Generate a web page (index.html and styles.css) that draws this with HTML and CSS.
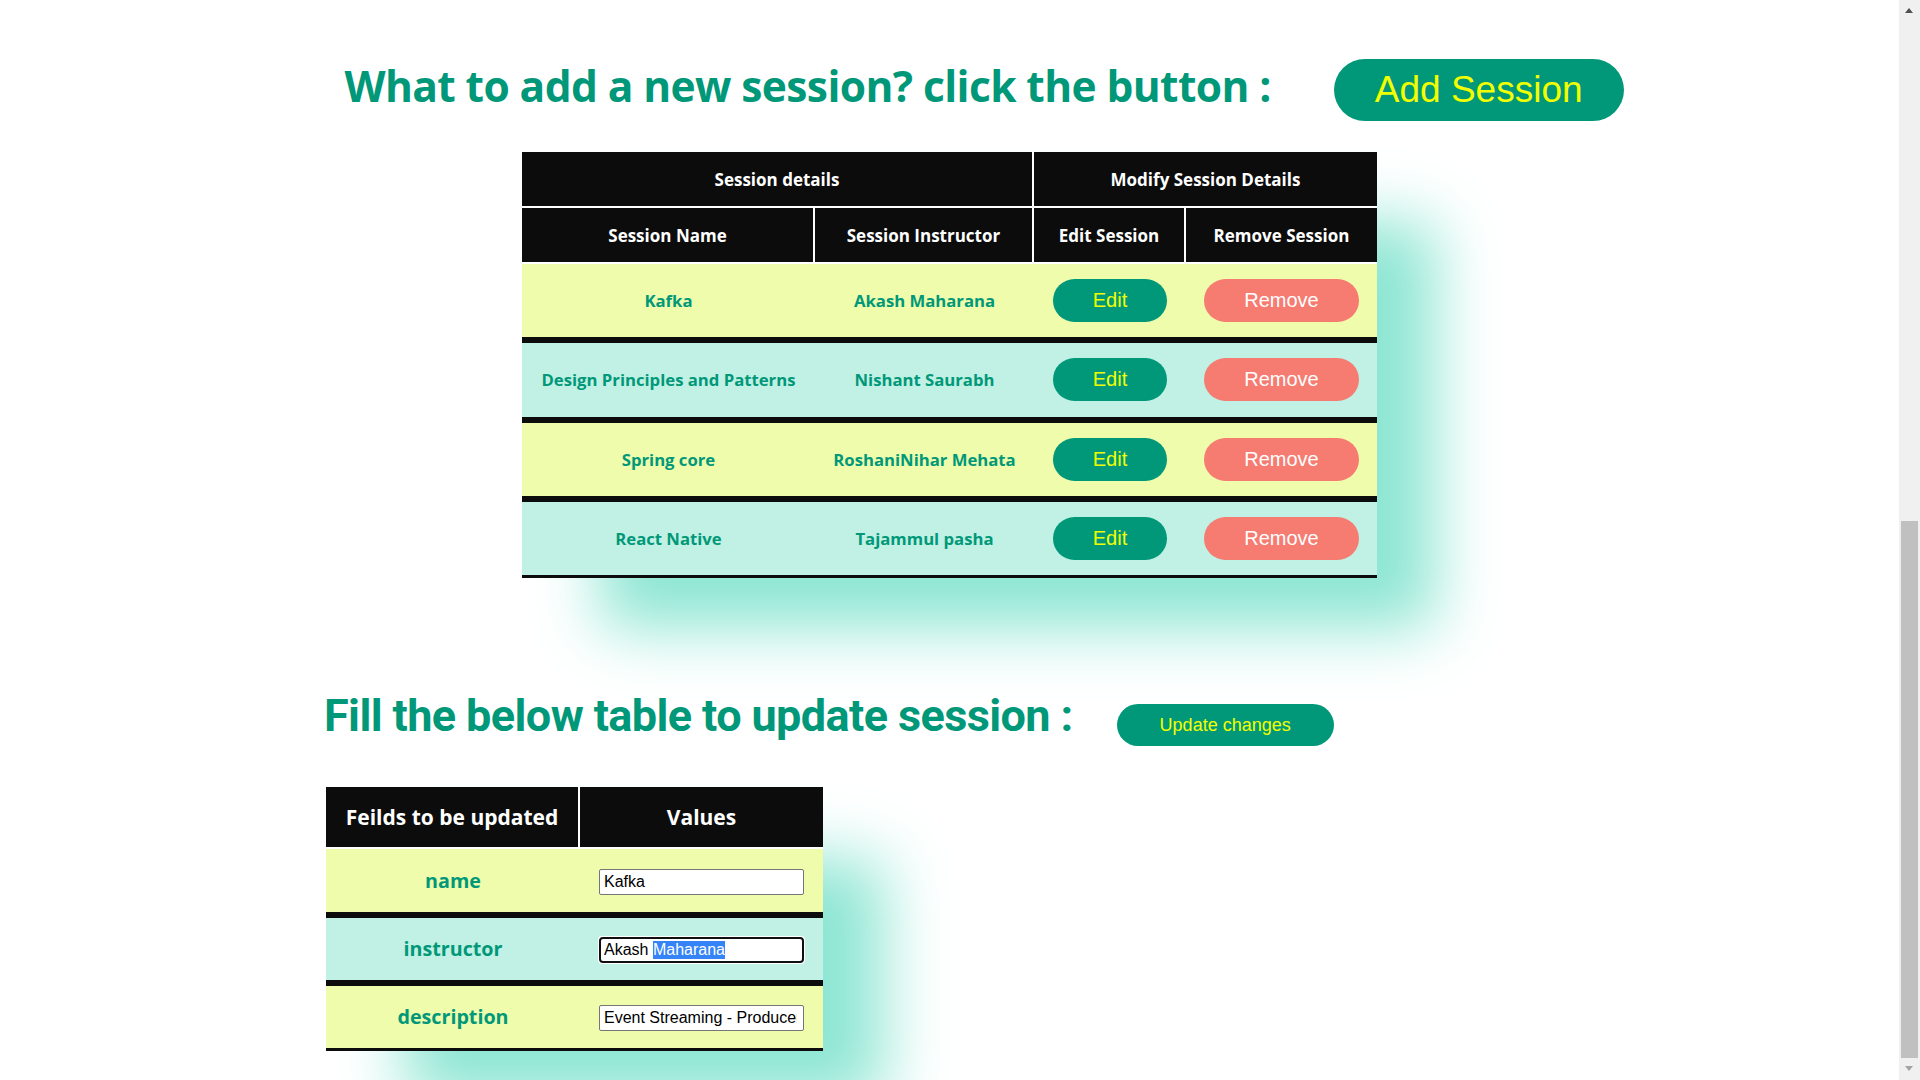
FILE: index.html
```html
<!DOCTYPE html>
<html lang="en">
<head>
<meta charset="utf-8">
<title>Sessions</title>
<link rel="stylesheet" href="styles.css">
</head>
<body>
<main class="page">
  <section class="add-row">
    <h1 class="title-main">What to add a new session? click the button :</h1>
    <button class="btn btn-add" type="button">Add Session</button>
  </section>

  <table class="sessions">
    <colgroup>
      <col class="c-name"><col class="c-inst"><col class="c-edit"><col class="c-remove">
    </colgroup>
    <thead>
      <tr class="head-top">
        <th colspan="2">Session details</th>
        <th colspan="2" class="last">Modify Session Details</th>
      </tr>
      <tr class="head-sub">
        <th>Session Name</th>
        <th>Session Instructor</th>
        <th>Edit Session</th>
        <th class="last">Remove Session</th>
      </tr>
    </thead>
    <tbody>
      <tr class="row-yellow">
        <td>Kafka</td><td>Akash Maharana</td>
        <td><button class="btn btn-edit" type="button">Edit</button></td>
        <td><button class="btn btn-remove" type="button">Remove</button></td>
      </tr>
      <tr class="row-mint">
        <td>Design Principles and Patterns</td><td>Nishant Saurabh</td>
        <td><button class="btn btn-edit" type="button">Edit</button></td>
        <td><button class="btn btn-remove" type="button">Remove</button></td>
      </tr>
      <tr class="row-yellow">
        <td>Spring core</td><td>RoshaniNihar Mehata</td>
        <td><button class="btn btn-edit" type="button">Edit</button></td>
        <td><button class="btn btn-remove" type="button">Remove</button></td>
      </tr>
      <tr class="row-mint">
        <td>React Native</td><td>Tajammul pasha</td>
        <td><button class="btn btn-edit" type="button">Edit</button></td>
        <td><button class="btn btn-remove" type="button">Remove</button></td>
      </tr>
    </tbody>
  </table>

  <section class="update-section">
    <div class="update-row">
      <h2 class="title-update">Fill the below table to update session :</h2>
      <button class="btn btn-update" type="button">Update changes</button>
    </div>
    <table class="update-table">
      <colgroup><col class="u-field"><col class="u-value"></colgroup>
      <thead>
        <tr><th>Feilds to be updated</th><th class="last">Values</th></tr>
      </thead>
      <tbody>
        <tr class="row-yellow">
          <td>name</td>
          <td><input class="field-input" type="text" value="Kafka"></td>
        </tr>
        <tr class="row-mint">
          <td>instructor</td>
          <td><input id="instructor-input" class="field-input" type="text" value="Akash Maharana"></td>
        </tr>
        <tr class="row-yellow">
          <td>description</td>
          <td><input class="field-input" type="text" value="Event Streaming - Producer and Consumer"></td>
        </tr>
      </tbody>
    </table>
  </section>
</main>

<div class="scrollbar" aria-hidden="true">
  <span class="sb-up"></span>
  <span class="sb-thumb"></span>
  <span class="sb-down"></span>
</div>
<script src="app.js"></script>
</body>
</html>
```
FILE: styles.css
```css
html, body { height: 100%; }
body {
  margin: 0 21px 0 0;
  background: #ffffff;
  font-family: "Open Sans", sans-serif;
  overflow: hidden;
}

.page { display: flex; flex-direction: column; }

/* ---------- headings rows ---------- */
.add-row {
  display: flex;
  align-items: baseline;
  justify-content: center;
  gap: 63px;
  padding: 59px 0 0 69px;
}
.title-main {
  margin: 0;
  font: 700 42.5px/1 "Open Sans", sans-serif;
  letter-spacing: -0.6px;
  color: #009879;
}

.btn {
  border: none;
  cursor: pointer;
  font-family: "Liberation Sans", Arial, sans-serif;
  line-height: normal;
}
.btn-add {
  font-size: 37px;
  padding: 10px 41px;
  border-radius: 32px;
  background: #009879;
  color: #f2ff00;
}

/* ---------- sessions table ---------- */
.sessions {
  margin: 31px auto 0;
  width: 855px;
  table-layout: fixed;
  border-collapse: separate;
  border-spacing: 0;
  box-shadow: 68px 60px 60px -10px #8de6d3;
}
.c-name { width: 293px; }
.c-inst { width: 219px; }
.c-edit { width: 152px; }
.c-remove { width: 191px; }

.sessions th, .update-table th {
  box-sizing: border-box;
  padding: 0;
  background: #0c0c0c;
  color: #ffffff;
  font-weight: 700;
  border-right: 2px solid #ffffff;
  border-bottom: 2px solid #ffffff;
}
.sessions th.last, .update-table th.last { border-right: none; }
.sessions th { height: 56px; font-size: 17px; }

.sessions td, .update-table td {
  box-sizing: border-box;
  padding: 0;
  text-align: center;
  vertical-align: middle;
  color: #009879;
  font-weight: 700;
  border-bottom: 6px solid #0c0c0c;
}
.sessions td { height: 79.3px; font-size: 16.7px; }
.sessions tbody tr:last-child td { height: 76.3px; border-bottom-width: 3px; }

.row-yellow td { background: #effcab; }
.row-mint td { background: #c0f1e4; }

.btn-edit, .btn-remove {
  font-size: 20px;
  padding: 10px 40px;
  border-radius: 22px;
}
.btn-edit { background: #009879; color: #f2ff00; }
.btn-remove { background: #f67b71; color: #ffffff; }

/* ---------- update section ---------- */
.update-section {
  padding-left: 324px;
}
.update-row {
  display: flex;
  align-items: baseline;
  gap: 44px;
  margin-top: 114.5px;
}
.title-update {
  margin: 0;
  font: 700 45px/1 "Roboto", sans-serif;
  letter-spacing: -0.6px;
  color: #009879;
}
.btn-update {
  font-size: 18px;
  padding: 10.5px 43px;
  border-radius: 21px;
  background: #009879;
  color: #f2ff00;
}

.update-table {
  margin: 41.3px 0 0 2px;
  width: 497px;
  table-layout: fixed;
  border-collapse: separate;
  border-spacing: 0;
  box-shadow: 70px 62px 62px -10px #8de6d3;
}
.u-field { width: 254px; }
.u-value { width: 243px; }
.update-table th { height: 62px; font-size: 21px; }
.update-table td { height: 68.3px; font-size: 19.7px; }
.update-table tbody tr:last-child td { height: 64.5px; border-bottom-width: 3px; }

.field-input {
  box-sizing: border-box;
  width: 205px;
  height: 26px;
  padding: 1px 6px 1px 4px;
  border: 1px solid #767676;
  border-radius: 2px;
  background: #ffffff;
  color: #000000;
  font: 16px "Liberation Sans", Arial, sans-serif;
}
.field-input::selection { background: #3584f7; color: #ffffff; }

/* ---------- browser scrollbar (drawn) ---------- */
.scrollbar {
  position: fixed;
  top: 0;
  right: 0;
  width: 21px;
  height: 100vh;
  background: #f0f0f0;
}
.sb-thumb {
  position: absolute;
  left: 2px;
  top: 521px;
  width: 17px;
  height: 537px;
  background: #c0c0c0;
}
.sb-up, .sb-down {
  position: absolute;
  left: 6px;
  width: 0;
  height: 0;
  border-left: 4.5px solid transparent;
  border-right: 4.5px solid transparent;
}
.sb-up { top: 8px; border-bottom: 5px solid #505050; }
.sb-down { bottom: 9px; border-top: 5px solid #a3a3a3; }
```
FILE: app.js
```js
var instructor = document.getElementById('instructor-input');
instructor.focus();
instructor.setSelectionRange(6, 14);
```
